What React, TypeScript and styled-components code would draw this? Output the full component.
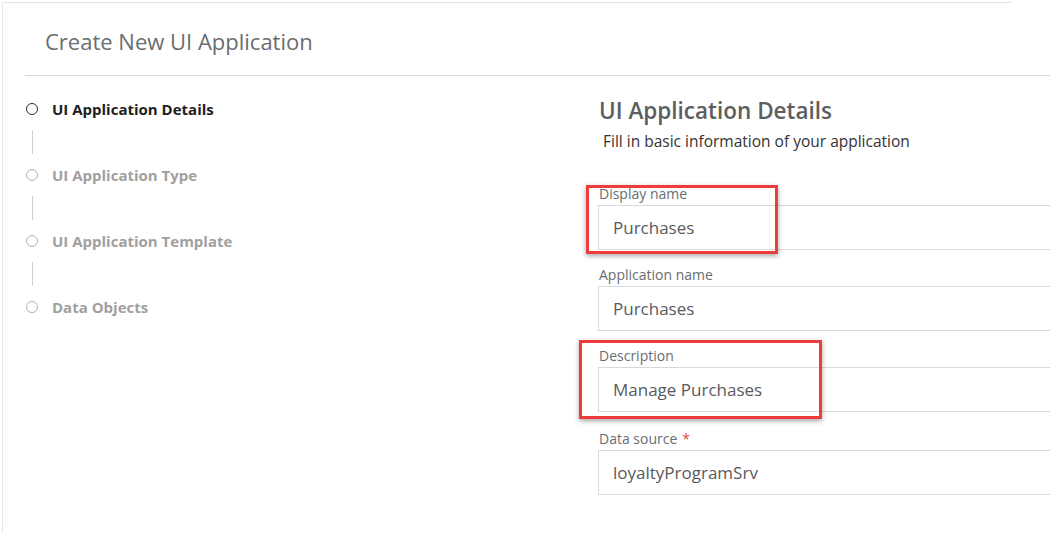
import React from "react";
import styled, { createGlobalStyle } from "styled-components";

const GlobalStyle = createGlobalStyle`
  html, body {
    margin: 0;
    padding: 0;
    background: #ffffff;
    overflow: hidden;
  }
  body {
    font-family: "Open Sans", "Noto Sans", "Liberation Sans", sans-serif;
    -webkit-font-smoothing: antialiased;
  }
`;

const Frame = styled.div`
  position: relative;
  margin: 2px 0 0 2px;
  width: 1010px;
  height: 531px;
  border-top: 1px solid #e4e4e4;
  border-left: 1px solid #e9e9e9;
  box-sizing: border-box;
`;

const Header = styled.header`
  margin-left: 22px;
  height: 73px;
  width: 1025px;
  display: flex;
  align-items: center;
  padding: 3px 0 0 20px;
  box-sizing: border-box;
  border-bottom: 1px solid #d9d9d9;
`;

const Title = styled.h1`
  margin: 0;
  font-size: 22px;
  font-weight: 400;
  color: #6a6d70;
`;

const Body = styled.div`
  display: flex;
`;

const StepsColumn = styled.nav`
  flex: none;
  width: 595px;
  padding: 23px 0 0 23px;
  box-sizing: border-box;
  display: flex;
  flex-direction: column;
`;

const StepRow = styled.div<{ $active?: boolean }>`
  display: flex;
  align-items: center;
  height: 20px;
  gap: 14px;
  font-size: 15px;
  font-weight: 700;
  color: ${(p) => (p.$active ? "#1e1e1e" : "#a0a0a0")};
`;

const StepCircle = styled.span<{ $active?: boolean }>`
  width: 12px;
  height: 12px;
  border-radius: 50%;
  box-sizing: border-box;
  border: 1.5px solid ${(p) => (p.$active ? "#2b2b2b" : "#b0b0b0")};
  flex: none;
`;

const Connector = styled.div`
  height: 46px;
  padding: 11px 0;
  box-sizing: border-box;
  margin-left: 6px;
  &::before {
    content: "";
    display: block;
    width: 1px;
    height: 100%;
    background: #cfcfcf;
  }
`;

const FormColumn = styled.section`
  flex: none;
  padding-top: 20px;
  width: 480px;
  display: flex;
  flex-direction: column;
`;

const Heading = styled.h2`
  margin: 0;
  font-size: 22.5px;
  line-height: 30px;
  font-weight: 600;
  color: #5c5e60;
  padding-left: 1px;
`;

const Subtitle = styled.p`
  margin: 5px 0 34px 5px;
  font-size: 15.5px;
  line-height: 20px;
  color: #333333;
`;

const Field = styled.div<{ $required?: boolean }>`
  position: relative;
  display: flex;
  flex-direction: column;
  margin-top: ${(p) => (p.$required ? "2px" : "0")};
  margin-bottom: 16px;
`;

const Label = styled.label`
  font-size: 14px;
  line-height: 18px;
  margin: 0 0 2px 1px;
  color: #6a6d70;
`;

const Asterisk = styled.span`
  color: #e34a4a;
  margin-left: 5px;
`;

const Input = styled.div`
  height: 45px;
  box-sizing: border-box;
  border: 1px solid #d9d9d9;
  background: #ffffff;
  display: flex;
  align-items: center;
  padding-left: 14px;
  font-size: 17px;
  color: #595a5c;
`;

const Highlight = styled.div<{ $left: number; $top: number; $w: number; $h: number }>`
  position: absolute;
  left: ${(p) => p.$left}px;
  top: ${(p) => p.$top}px;
  width: ${(p) => p.$w}px;
  height: ${(p) => p.$h}px;
  box-sizing: border-box;
  border: 3px solid #ee3b3b;
  box-shadow: 0 2px 5px rgba(0, 0, 0, 0.35);
  pointer-events: none;
`;

const steps = [
  "UI Application Details",
  "UI Application Type",
  "UI Application Template",
  "Data Objects",
];

type FieldDef = {
  label: string;
  value: string;
  required?: boolean;
  highlight?: { left: number; top: number; w: number; h: number };
};

const fields: FieldDef[] = [
  { label: "Display name", value: "Purchases", highlight: { left: -12, top: 0, w: 192, h: 69 } },
  { label: "Application name", value: "Purchases" },
  { label: "Description", value: "Manage Purchases", highlight: { left: -19, top: -7, w: 243, h: 79 } },
  { label: "Data source", value: "loyaltyProgramSrv", required: true },
];

export default function App() {
  return (
    <>
      <GlobalStyle />
      <Frame>
        <Header>
          <Title>Create New UI Application</Title>
        </Header>
        <Body>
          <StepsColumn>
            {steps.map((s, i) => (
              <React.Fragment key={s}>
                {i > 0 && <Connector />}
                <StepRow $active={i === 0}>
                  <StepCircle $active={i === 0} />
                  {s}
                </StepRow>
              </React.Fragment>
            ))}
          </StepsColumn>
          <FormColumn>
            <Heading>UI Application Details</Heading>
            <Subtitle>Fill in basic information of your application</Subtitle>
            {fields.map((f) => (
              <Field key={f.label} $required={f.required}>
                <Label>
                  {f.label}
                  {f.required && <Asterisk>*</Asterisk>}
                </Label>
                <Input>{f.value}</Input>
                {f.highlight && (
                  <Highlight
                    $left={f.highlight.left}
                    $top={f.highlight.top}
                    $w={f.highlight.w}
                    $h={f.highlight.h}
                  />
                )}
              </Field>
            ))}
          </FormColumn>
        </Body>
      </Frame>
    </>
  );
}
